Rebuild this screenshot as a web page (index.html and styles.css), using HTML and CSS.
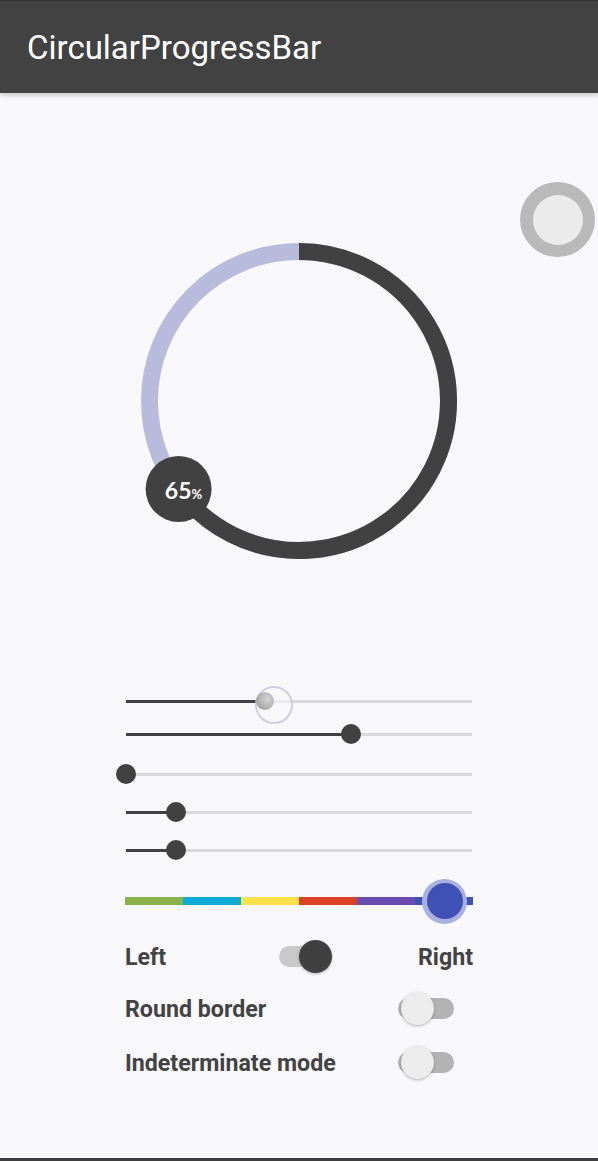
FILE: index.html
```html
<!DOCTYPE html>
<html>
<head>
<meta charset="utf-8">
<link rel="stylesheet" href="styles.css">
</head>
<body>
<div class="app">
  <header class="appbar"><h1 class="title">CircularProgressBar</h1></header>
  <main class="content">
    <section class="stage">
      <div class="fab-ghost"><div class="fab-inner"></div></div>
      <svg class="ring" width="320" height="320" viewBox="0 0 320 320">
        <circle cx="160" cy="160" r="149.5" fill="none" stroke="#b8bbdb" stroke-width="17"/>
        <path d="M160 10.5 A149.5 149.5 0 1 1 39.1 247.9" fill="none" stroke="#414141" stroke-width="17"/>
        <circle cx="39.6" cy="248" r="33" fill="#414141"/>
        <text class="pct" x="44.5" y="257.5" text-anchor="middle"><tspan class="pct-num">65</tspan><tspan class="pct-sign">%</tspan></text>
      </svg>
    </section>

    <section class="controls">
      <div class="slider s1">
        <div class="track"></div>
        <div class="fill" style="width:131px"></div>
        <div class="press-ring"></div>
        <div class="thumb ghost"></div>
      </div>
      <div class="slider s2">
        <div class="track"></div>
        <div class="fill" style="width:225px"></div>
        <div class="thumb" style="left:215px"></div>
      </div>
      <div class="slider s3">
        <div class="track"></div>
        <div class="thumb" style="left:-10px"></div>
      </div>
      <div class="slider s4">
        <div class="track"></div>
        <div class="fill" style="width:50px"></div>
        <div class="thumb" style="left:40px"></div>
      </div>
      <div class="slider s5">
        <div class="track"></div>
        <div class="fill" style="width:50px"></div>
        <div class="thumb" style="left:40px"></div>
      </div>
      <div class="color-slider">
        <div class="spectrum">
          <span class="seg green"></span>
          <span class="seg cyan"></span>
          <span class="seg yellow"></span>
          <span class="seg red"></span>
          <span class="seg purple"></span>
          <span class="seg blue"></span>
        </div>
        <div class="color-halo"></div>
        <div class="color-thumb"></div>
      </div>

      <div class="row r1">
        <span class="label">Left</span>
        <div class="switch on"><div class="switch-track"></div><div class="switch-thumb"></div></div>
        <span class="label right">Right</span>
      </div>
      <div class="row r2">
        <span class="label">Round border</span>
        <div class="switch off"><div class="switch-track"></div><div class="switch-thumb"></div></div>
      </div>
      <div class="row r3">
        <span class="label">Indeterminate mode</span>
        <div class="switch off"><div class="switch-track"></div><div class="switch-thumb"></div></div>
      </div>
    </section>
  </main>
  <footer class="navbar"></footer>
</div>
</body>
</html>
```
FILE: styles.css
```css
* { box-sizing: border-box; }
html, body { margin: 0; padding: 0; }
body {
  background: #f8f7fa;
  font-family: Roboto, "Liberation Sans", sans-serif;
  overflow: hidden;
}
.app {
  width: 598px;
  height: 1161px;
  display: flex;
  flex-direction: column;
}
.appbar {
  height: 93px;
  flex: 0 0 93px;
  background: #424242;
  border-top: 1px solid #2f2f2f;
  display: flex;
  align-items: center;
  padding-left: 27px;
  box-shadow: 0 2px 5px rgba(0,0,0,0.22);
  position: relative;
  z-index: 2;
}
.title {
  margin: 0;
  margin-top: 1px;
  color: #ffffff;
  font-weight: 400;
  font-size: 33px;
  letter-spacing: 0;
}
.content {
  flex: 1;
  display: flex;
  flex-direction: column;
}
.stage {
  position: relative;
  height: 468px;
  padding-top: 148px;
  display: flex;
  justify-content: center;
  align-items: flex-start;
}
.ring { display: block; }
.pct { fill: #ffffff; font-family: Lato, Roboto, sans-serif; font-weight: 700; }
.pct-num { font-size: 23px; }
.pct-sign { font-size: 13px; }
.fab-ghost {
  position: absolute;
  left: 520px;
  top: 89px;
  width: 75px;
  height: 75px;
  border-radius: 50%;
  background: #b9b9b9;
  display: flex;
  align-items: center;
  justify-content: center;
}
.fab-inner {
  width: 50px;
  height: 50px;
  border-radius: 50%;
  background: #ebebeb;
}
.controls {
  width: 348px;
  margin: 0 auto;
  padding-top: 130px;
  display: flex;
  flex-direction: column;
}
.slider {
  position: relative;
  width: 346px;
  height: 20px;
  margin-left: 1px;
}
.s2 { margin-top: 13px; }
.s3 { margin-top: 20px; }
.s4 { margin-top: 18px; }
.s5 { margin-top: 18px; }
.track {
  position: absolute;
  left: 0; right: 0;
  top: 8.5px;
  height: 3px;
  background: #d9d8dc;
}
.fill {
  position: absolute;
  left: 0;
  top: 8.5px;
  height: 3px;
  background: #414141;
}
.thumb {
  position: absolute;
  top: 0;
  width: 20px;
  height: 20px;
  border-radius: 50%;
  background: #414141;
}
.thumb.ghost {
  left: 130px;
  top: 1px;
  width: 18px;
  height: 18px;
  background: radial-gradient(circle at 65% 40%, #d4d4d4 0%, #a8a8a8 70%, #8d8d8d 100%);
}
.press-ring {
  position: absolute;
  left: 129px;
  top: -5px;
  width: 38px;
  height: 38px;
  border-radius: 50%;
  border: 2px solid #cfcde2;
  background: rgba(248,247,250,0.6);
}
.color-slider {
  position: relative;
  margin-top: 18px;
  height: 46px;
  width: 348px;
  display: flex;
  align-items: center;
}
.spectrum {
  display: flex;
  width: 348px;
  height: 8px;
}
.seg { flex: 1; height: 8px; }
.green { background: #8bb14b; }
.cyan { background: #0eaad8; }
.yellow { background: #fde14a; }
.red { background: #dc4126; }
.purple { background: #6a4caf; }
.blue { background: #3f51b5; }
.color-halo {
  position: absolute;
  left: 297px;
  top: 0.5px;
  width: 45px;
  height: 45px;
  border-radius: 50%;
  background: #aab1df;
}
.color-thumb {
  position: absolute;
  left: 301.5px;
  top: 5px;
  width: 36px;
  height: 36px;
  border-radius: 50%;
  background: #3f51b5;
}
.row {
  display: flex;
  align-items: center;
  height: 33px;
  width: 348px;
}
.r1 { margin-top: 16px; }
.r2 { margin-top: 19px; }
.r3 { margin-top: 21px; }
.label {
  font-size: 23.2px;
  font-weight: 700;
  color: #434343;
}
.label.right { margin-left: auto; }
.switch {
  position: relative;
  width: 56px;
  height: 33px;
  display: flex;
  align-items: center;
}
.switch-track {
  width: 56px;
  height: 21px;
  border-radius: 11px;
  background: #b3b3b3;
}
.switch-thumb {
  position: absolute;
  top: 0;
  width: 33px;
  height: 33px;
  border-radius: 50%;
}
.switch.on {
  width: 54px;
  margin-left: 113px;
}
.switch.on .switch-track { background: #c9c9c9; width: 50px; }
.switch.on .switch-thumb {
  left: 20px;
  background: #404040;
  box-shadow: 0 1px 3px rgba(0,0,0,0.25);
}
.switch.off { margin-left: auto; margin-right: 19px; }
.switch.off .switch-thumb {
  left: 3px;
  background: #ececec;
  box-shadow: 0 1px 3px rgba(0,0,0,0.28);
}
.navbar {
  height: 3px;
  flex: 0 0 3px;
  background: #3e3e3e;
}
```
